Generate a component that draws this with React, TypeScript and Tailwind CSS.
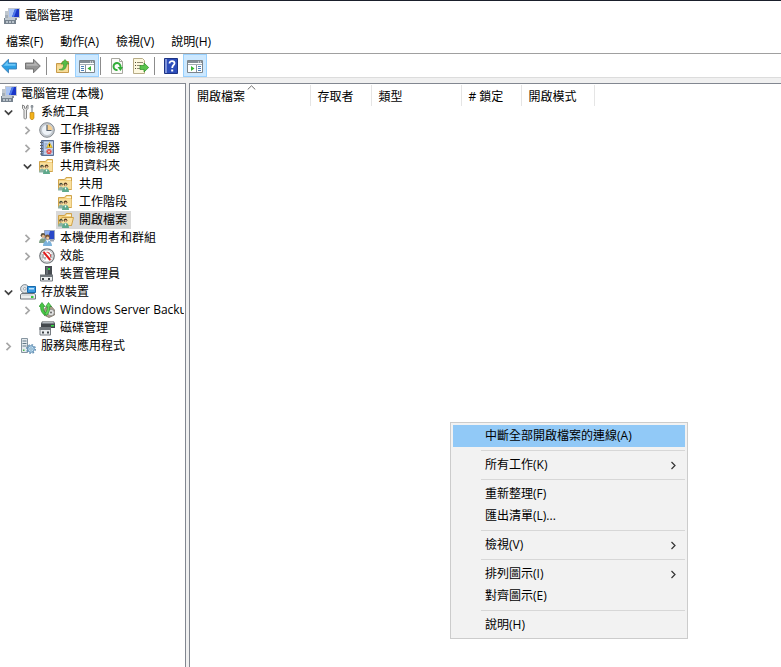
import { useState } from 'react';
import type { ReactNode } from 'react';

const Svg = ({ children }: { children: ReactNode }) => (
  <svg className="size-4 shrink-0" viewBox="0 0 16 16" fill="none" aria-hidden="true">
    {children}
  </svg>
);

const ComputerIcon = () => (
  <Svg>
    <path d="M1 3h4v8H1z" fill="#a3adb7" />
    <path d="M1 4h3M1 6h3" stroke="#d9dfe5" />
    <path d="M4 0h12v10H4z" fill="#c3c8cf" />
    <path d="M5 1h10v8H5z" fill="#1a36c8" />
    <path d="M5 1h6L8 9H5z" fill="#a9c4f4" />
    <path d="M11 1h2l-3 8H8z" fill="#4f7bea" />
    <path d="M9 10h4v2H9z" fill="#8b8f96" />
    <path d="M0 10h11l1 2v4H0z" fill="#76828e" />
    <path d="M1 10h10v2H1z" fill="#c0c9d1" />
    <path d="M2 13h2v2H2zM5 13h2v2H5zM8 13h2v2H8z" fill="#b9c2ca" />
  </Svg>
);

const ToolsIcon = () => (
  <Svg>
    <path
      d="M2.5 1v3.500L4 6v8.200c0 1 2.500 1 2.500 0V6L8 4.500V1L6.500 2v2.200h-2V2z"
      fill="#e9e9e9"
      stroke="#7c7c7c"
      strokeWidth=".9"
    />
    <path d="M11 1h2l.5 2-.8 1V9h-1.400V4l-.8-1z" fill="#8f969c" />
    <path d="M10 8.500h4V14l-1 1.500h-2L10 14z" fill="#f2b21c" stroke="#b57b08" strokeWidth=".6" />
  </Svg>
);

const ClockIcon = () => (
  <Svg>
    <circle cx="8" cy="8" r="7.300" fill="#c9cdd1" stroke="#82888e" />
    <circle cx="8" cy="8" r="5.500" fill="#eef3f8" stroke="#adb6bf" strokeWidth=".6" />
    <path d="M8 8V2.500A5.500 5.500 0 0 1 13.500 8z" fill="#f5cf92" />
    <path d="M8 3v5.500h4.500" stroke="#55616e" strokeWidth="1.200" />
  </Svg>
);

const EventIcon = () => (
  <Svg>
    <path d="M2.500.5h12v15h-12z" fill="#7f97c0" stroke="#5a6f96" />
    <path d="M5 1.500h9v13H5z" fill="#c5d5ec" />
    <path d="M5.500 4h3M5.500 6h2M5.500 8h3M5.500 12h1M13 10h1M13 12h1" stroke="#7f97c0" />
    <path d="M1 2.500h3M1 5.500h3M1 8.500h3M1 11.500h3M1 14h3" stroke="#5d6269" />
    <path d="M10.500 2.500L13.300 7.500H7.700z" fill="#ffd42a" stroke="#b99412" strokeWidth=".6" />
    <path d="M10.500 4v2.500" stroke="#3a3208" />
    <circle cx="10" cy="11.500" r="2.600" fill="#dc4a48" />
    <path d="M9 10.500l2 2M11 10.500l-2 2" stroke="#fff" strokeWidth=".7" />
  </Svg>
);

const SharedFolderIcon = ({ open = false }: { open?: boolean }) => (
  <Svg>
    <path d="M.5 3.500h6l1.500-2h5.500v12H.5z" fill="#f4d07c" stroke="#cfa34b" />
    <path d="M9 2.500h4v1.500H8z" fill="#fff7dc" />
    {open ? (
      <path d="M4 5.500h11.500l-2 8H2z" fill="#fbe2a0" stroke="#cfa34b" />
    ) : (
      <path d="M1 5h12.500v8H1z" fill="#f9df9d" />
    )}
    <circle cx="3" cy="8.500" r="1.700" fill="#3d4a3c" />
    <circle cx="3.200" cy="9.300" r="1" fill="#e3b689" />
    <path d="M0 14.500c0-5 6-5 6 0z" fill="#8cb2a4" />
    <circle cx="7.500" cy="8.300" r="1.800" fill="#5c3f22" />
    <circle cx="7.700" cy="9.100" r="1.100" fill="#e9bd90" />
    <path d="M4 16c0-7 7-7 7 0z" fill="#5fa98c" />
    <path d="M6.500 11.500l1 2.500 1-2.500z" fill="#fff" />
  </Svg>
);

const UsersIcon = () => (
  <Svg>
    <path d="M5.500.5h10v9h-10z" fill="#2847c8" stroke="#9aa6bd" />
    <path d="M6 1h5L8.500 9H6z" fill="#8fb0f0" />
    <path d="M11 10h4v1.500h-4z" fill="#9aa2ad" />
    <circle cx="4" cy="5.200" r="2.300" fill="#5b5140" />
    <circle cx="4.300" cy="6.200" r="1.500" fill="#e3b689" />
    <path d="M0 13c0-6.500 7.500-6.500 7.500 0z" fill="#7e9e84" />
    <circle cx="8.500" cy="7" r="2.400" fill="#7b5530" />
    <circle cx="8.700" cy="8" r="1.500" fill="#f0c79b" />
    <path d="M4 16c0-7.500 9-7.500 9 0z" fill="#7cb3dc" />
    <path d="M7.500 10.500l1 2.500 1-2.500z" fill="#fff" />
  </Svg>
);

const PerformanceIcon = () => (
  <Svg>
    <circle cx="8" cy="8" r="7.200" fill="#fff" stroke="#74787c" strokeWidth="1.300" />
    <circle cx="8" cy="8" r="5.900" stroke="#b9bdc0" strokeWidth=".8" />
    <path d="M4 10.500V6M6 11.500V9M12 10V6M10 4.500V6" stroke="#44474a" strokeWidth=".8" />
    <path d="M4.500 4l6.800 8" stroke="#e01c1c" strokeWidth="2" />
    <path d="M7.500 4.200c2.500-.3 4 1.500 4 4.500" stroke="#e01c1c" strokeWidth=".8" />
  </Svg>
);

const DeviceIcon = () => (
  <Svg>
    <path d="M6 0h7v9H6z" fill="#464b50" />
    <path d="M7 1h2v7H7z" fill="#656c72" />
    <path d="M9 2h2v2H9z" fill="#2fe03d" />
    <path d="M1.500 9.500h12v5.500h-12z" fill="#eceeef" stroke="#777d82" />
    <path d="M1 8.500h13V11H1z" fill="#71777c" />
    <path d="M3 12h2v2H3zM9 12h2v2H9z" fill="#3a3f44" />
  </Svg>
);

const StorageIcon = () => (
  <Svg>
    <circle cx="4.800" cy="4.800" r="4.200" fill="#dfe4e8" stroke="#7e8890" />
    <circle cx="4.800" cy="4.800" r="1.300" fill="#fff" stroke="#7e8890" strokeWidth=".7" />
    <path d="M7.500 2.500h8v6h-8z" fill="#3a9ae2" stroke="#1769ab" />
    <path d="M9 4h5v1.500H9z" fill="#bfe2fb" />
    <path d="M1.500 9.500h13l1 1.500v4H.5v-4z" fill="#eceeef" stroke="#6e757b" />
    <path d="M11 12h2.500v2H11z" fill="#38c93e" />
    <path d="M2 11h11" stroke="#c3c8cc" />
  </Svg>
);

const BackupIcon = () => (
  <Svg>
    <path d="M6 6l6-2 3.500 4v5L10 15.500 5 13z" fill="#b0a08a" stroke="#7a7064" strokeWidth=".8" />
    <circle cx="12" cy="10.500" r="3.300" fill="#e2e2e2" stroke="#858585" strokeWidth=".8" />
    <circle cx="12" cy="10.500" r="1" fill="#666" />
    <path
      d="M3 .500l3 4H4.500c0 3 .5 5 3 7.500L6 13.500C2.500 11 1.500 8 1.500 4.500H0z"
      fill="#48c645"
      stroke="#1d8a22"
      strokeWidth=".6"
    />
    <path
      d="M9.500.500l3 4h-1.700c0 4-.8 6.500-3.300 9L6 11.500C8 9 8.300 7 8.300 4.500H6.700z"
      fill="#5fd75a"
      stroke="#1d8a22"
      strokeWidth=".6"
    />
  </Svg>
);

const DiskIcon = () => (
  <Svg>
    <path d="M3 1.500h12l1 2V8H2V3.500z" fill="#43484d" />
    <path d="M3.500 2h11l.5 1.500H3z" fill="#b4babf" />
    <path d="M12 5h3v1.500h-3z" fill="#36dd43" />
    <path d="M1 7.500h10.500v7.500H1z" fill="#eceeef" stroke="#777d82" />
    <path d="M.5 7H12v3H.5z" fill="#71777c" />
    <path d="M3 11.500h2v2H3zM8 11.500h2v2H8z" fill="#3d4247" />
  </Svg>
);

const ServicesIcon = () => (
  <Svg>
    <path d="M1.500.5h6v14h-6z" fill="#e4eaee" stroke="#8695a0" />
    <path d="M2.500 3h4M2.500 5.500h4M2.500 8h4" stroke="#637a88" />
    <path d="M3 11.500h1.500V13H3z" fill="#43ba49" />
    <circle cx="11" cy="11" r="4.300" stroke="#6591b4" strokeWidth="1.400" strokeDasharray="1.700 1.670" />
    <circle cx="11" cy="11" r="3.300" fill="#c3e0f3" stroke="#5b8cb2" strokeWidth="1" />
    <circle cx="11" cy="11" r="1.200" fill="#fff" stroke="#4e86ae" strokeWidth=".7" />
  </Svg>
);

const BackIcon = () => (
  <Svg>
    <path d="M.7 8L7.500 1.200V5h8v6h-8v3.800z" fill="#2b9fe4" stroke="#3c7fb5" strokeWidth=".9" strokeLinejoin="round" />
    <path d="M2.500 7.700L6.700 3.500V6h7.800v1.700z" fill="#6cc6f6" />
  </Svg>
);

const ForwardIcon = () => (
  <Svg>
    <path d="M15.300 8L8.500 1.200V5h-8v6h8v3.800z" fill="#949494" stroke="#6c6c6c" strokeWidth=".9" strokeLinejoin="round" />
    <path d="M13.500 7.700L9.300 3.500V6H1.500v1.700z" fill="#b4b4b4" />
  </Svg>
);

const UpFolderIcon = () => (
  <Svg>
    <path d="M1.500 5.500h5l1-2h6v11h-12z" fill="#f0cb78" stroke="#c79a4a" />
    <path d="M2 7.500h11V14H2z" fill="#f7dc98" />
    <path
      d="M4 11.500c3.500 0 5-2 4.500-5.500H6L10 1.500l4 4.500h-2.500c.3 4-2.500 7.500-7.500 5.500z"
      fill="#54bd46"
      stroke="#3b8f33"
      strokeWidth=".6"
    />
  </Svg>
);

// Window with a side pane; the arrow shows which pane the button toggles
const PaneIcon = ({ side }: { side: 'left' | 'right' }) => (
  <Svg>
    <path d="M.5 2.500h15v12H.5z" fill="#fff" stroke="#7d858c" />
    <path d="M1 3h14v2H1z" fill="#858e96" />
    <path d="M11 4h1M13 4h1" stroke="#fff" />
    <path d="M1 6.500h14" stroke="#a5adb4" />
    {side === 'left' ? (
      <>
        <path d="M6.500 7v7" stroke="#8a929a" />
        <path d="M2 8.500h3M2 10.500h3M2 12.500h3" stroke="#4b7fb8" />
        <path d="M12 8v5l-3.500-2.500z" fill="#35b431" />
      </>
    ) : (
      <>
        <path d="M9.500 7v7" stroke="#8a929a" />
        <path d="M11 8.500h3M11 10.500h3M11 12.500h3" stroke="#4b7fb8" />
        <path d="M4 8v5l3.500-2.500z" fill="#35b431" />
      </>
    )}
  </Svg>
);

const RefreshIcon = () => (
  <Svg>
    <path d="M2.500.5h8l3 3v12h-11z" fill="#fbfbf8" stroke="#a8a8a0" />
    <path d="M10.500.5v3h3" stroke="#a8a8a0" />
    <path d="M8.500 12A3.500 3.500 0 1 1 11.500 9" stroke="#32ad38" strokeWidth="2" />
    <path d="M8.500 9H14l-2.500 4z" fill="#32ad38" />
  </Svg>
);

const ExportIcon = () => (
  <Svg>
    <path d="M.5.500h9l2 2v13H.5z" fill="#fdf8df" stroke="#b7ac86" />
    <path d="M2 4.500h1M2 7.500h1M2 10.500h1" stroke="#514c3c" />
    <path d="M4 4.500h6M4 7.500h4M4 10.500h3" stroke="#8e8870" />
    <path d="M7 7.500h4V5l4.700 4.500L11 14v-2.500H7z" fill="#59c44c" stroke="#2b8e25" strokeWidth=".7" />
  </Svg>
);

const HelpIcon = () => (
  <Svg>
    <path d="M1.500.5h13v15h-13z" fill="#2b4cba" stroke="#1c3384" />
    <path d="M2 1h2v14H2z" fill="#8095da" />
    <path d="M6.500 5.500c0-3.500 5.500-3 5 0C11.300 7.200 9.200 7 9.200 10" stroke="#fff" strokeWidth="1.800" />
    <path d="M8.200 11.500h2v2h-2z" fill="#fff" />
  </Svg>
);

const Chevron = ({ open }: { open?: boolean }) => (
  <svg className="size-[9px]" viewBox="0 0 9 9" fill="none" aria-hidden="true">
    {open ? (
      <path d="M.8 2.500l3.700 3.700 3.700-3.700" stroke="#404040" strokeWidth="1.700" />
    ) : (
      <path d="M2.500.8l3.700 3.700-3.700 3.700" stroke="#a6a6a6" strokeWidth="1.700" />
    )}
  </svg>
);

type TreeNode = {
  label: string;
  icon: ReactNode;
  expandable?: boolean;
  children?: TreeNode[];
};

const tree: TreeNode[] = [
  {
    label: '系統工具',
    icon: <ToolsIcon />,
    expandable: true,
    children: [
      { label: '工作排程器', icon: <ClockIcon />, expandable: true },
      { label: '事件檢視器', icon: <EventIcon />, expandable: true },
      {
        label: '共用資料夾',
        icon: <SharedFolderIcon />,
        expandable: true,
        children: [
          { label: '共用', icon: <SharedFolderIcon /> },
          { label: '工作階段', icon: <SharedFolderIcon /> },
          { label: '開啟檔案', icon: <SharedFolderIcon open /> },
        ],
      },
      { label: '本機使用者和群組', icon: <UsersIcon />, expandable: true },
      { label: '效能', icon: <PerformanceIcon />, expandable: true },
      { label: '裝置管理員', icon: <DeviceIcon /> },
    ],
  },
  {
    label: '存放裝置',
    icon: <StorageIcon />,
    expandable: true,
    children: [
      { label: 'Windows Server Backup', icon: <BackupIcon />, expandable: true },
      { label: '磁碟管理', icon: <DiskIcon /> },
    ],
  },
  { label: '服務與應用程式', icon: <ServicesIcon />, expandable: true },
];

type TreeItemProps = {
  node: TreeNode;
  selected: string;
  onSelect: (label: string) => void;
};

const TreeItem = ({ node, selected, onSelect }: TreeItemProps) => {
  const [open, setOpen] = useState(Boolean(node.children));

  return (
    <li>
      <div className="flex h-[18px] items-center">
        <div className="flex w-[18px] shrink-0 justify-center pr-0.5">
          {node.expandable && (
            <button
              aria-label={node.label}
              aria-expanded={open}
              onClick={() => setOpen(!open)}
            >
              <Chevron open={open} />
            </button>
          )}
        </div>
        <button
          onClick={() => onSelect(node.label)}
          className={`flex h-full shrink-0 items-center gap-[5px] pl-0.5 pr-1 whitespace-nowrap ${
            selected === node.label ? 'bg-[#d9d9d9]' : ''
          }`}
        >
          {node.icon}
          {node.label}
        </button>
      </div>
      {open && node.children && (
        <ul className="pl-[19px]">
          {node.children.map((child) => (
            <TreeItem key={child.label} node={child} selected={selected} onSelect={onSelect} />
          ))}
        </ul>
      )}
    </li>
  );
};

const ToolButton = ({ label, active, children }: { label: string; active?: boolean; children: ReactNode }) => (
  <button
    aria-label={label}
    className={`flex h-[23px] w-6 items-center justify-center ${
      active ? 'border border-[#99d1ff] bg-[#cce8ff]' : ''
    }`}
  >
    {children}
  </button>
);

const ToolSeparator = () => <div className="ml-px mr-1 h-[18px] w-px bg-[#8c8c8c]" />;

const Toolbar = () => (
  <div className="flex h-6 items-center border-b border-[#dcdcdc] pl-px">
    <button aria-label="上一頁" className="w-5">
      <BackIcon />
    </button>
    <ToolButton label="下一頁">
      <ForwardIcon />
    </ToolButton>
    <ToolSeparator />
    <ToolButton label="上移一層">
      <UpFolderIcon />
    </ToolButton>
    <ToolButton label="顯示/隱藏主控台樹狀目錄" active>
      <PaneIcon side="left" />
    </ToolButton>
    <ToolSeparator />
    <ToolButton label="重新整理">
      <RefreshIcon />
    </ToolButton>
    <ToolButton label="匯出清單">
      <ExportIcon />
    </ToolButton>
    <ToolSeparator />
    <ToolButton label="說明">
      <HelpIcon />
    </ToolButton>
    <ToolButton label="顯示/隱藏執行窗格" active>
      <PaneIcon side="right" />
    </ToolButton>
  </div>
);

const Column = ({ className, sorted, children }: { className: string; sorted?: boolean; children: ReactNode }) => (
  <th
    className={`relative border-r border-[#e5e5e5] pt-0.5 pr-0 pb-0 pl-[7px] font-normal whitespace-nowrap ${className}`}
    aria-sort={sorted ? 'ascending' : undefined}
  >
    {children}
    {sorted && (
      <svg className="absolute top-0 left-[57px] h-[5px] w-[9px]" viewBox="0 0 9 5" fill="none" aria-hidden="true">
        <path d="M.7 4.500l3.800-3.700 3.800 3.700" stroke="#6d6d6d" />
      </svg>
    )}
  </th>
);

const FileTable = () => (
  <table className="table-fixed">
    <thead>
      <tr className="h-[21px] text-left">
        <Column className="w-[120px]" sorted>
          開啟檔案
        </Column>
        <Column className="w-[61px]">存取者</Column>
        <Column className="w-[90px]">類型</Column>
        <Column className="w-[60px]"># 鎖定</Column>
        <Column className="w-[73px]">開啟模式</Column>
      </tr>
    </thead>
  </table>
);

type MenuEntry = { label: string; submenu?: boolean };

const menuGroups: MenuEntry[][] = [
  [{ label: '中斷全部開啟檔案的連線(A)' }],
  [{ label: '所有工作(K)', submenu: true }],
  [{ label: '重新整理(F)' }, { label: '匯出清單(L)...' }],
  [{ label: '檢視(V)', submenu: true }],
  [{ label: '排列圖示(I)', submenu: true }, { label: '對齊圖示(E)' }],
  [{ label: '說明(H)' }],
];

const ContextMenu = () => {
  const [highlighted, setHighlighted] = useState(menuGroups[0][0].label);

  return (
    <div
      role="menu"
      className="absolute top-[422px] left-[450px] w-[238px] border border-[#cccccc] bg-[#f2f2f2] p-0.5"
    >
      {menuGroups.map((group, i) => (
        <div key={group[0].label} role="group">
          {i > 0 && <div className="my-[3px] ml-7 h-px bg-[#d7d7d7]" />}
          {group.map((item) => (
            <button
              key={item.label}
              role="menuitem"
              onMouseEnter={() => setHighlighted(item.label)}
              className={`flex h-[22px] w-full items-center justify-between pr-[7px] pl-8 ${
                highlighted === item.label ? 'bg-[#91c9f7]' : ''
              }`}
            >
              {item.label}
              {item.submenu && (
                <svg className="size-[9px]" viewBox="0 0 9 9" fill="none" aria-hidden="true">
                  <path d="M2.500 1L6 4.500 2.500 8" stroke="#333" strokeWidth="1.200" />
                </svg>
              )}
            </button>
          ))}
        </div>
      ))}
    </div>
  );
};

export default function App() {
  const [selected, setSelected] = useState('開啟檔案');

  return (
    <div className="relative flex min-h-screen flex-col bg-white font-['Open_Sans','Noto_Sans_CJK_TC',sans-serif] text-[12px] leading-[18px] text-black">
      <header className="border-t border-[#1a1f2b]">
        <h1 className="flex h-[29px] items-center gap-[5px] pl-1">
          <ComputerIcon />
          電腦管理
        </h1>
        <nav className="flex h-6 items-center gap-[17px] border-b border-[#a0a0a0] pl-1.5">
          <button>檔案(F)</button>
          <button>動作(A)</button>
          <button>檢視(V)</button>
          <button>說明(H)</button>
        </nav>
        <Toolbar />
      </header>

      <main className="flex flex-1 gap-[3px] bg-[#f0f0f0] pt-[5px]">
        <aside className="w-[186px] shrink-0 border-t border-r border-[#828790] bg-white pt-px pr-px">
          <div className="overflow-hidden">
            <button
              onClick={() => setSelected('電腦管理 (本機)')}
              className={`flex h-[18px] items-center gap-1 pr-1 pl-px ${
                selected === '電腦管理 (本機)' ? 'bg-[#d9d9d9]' : ''
              }`}
            >
              <ComputerIcon />
              電腦管理 (本機)
            </button>
            <ul>
              {tree.map((node) => (
                <TreeItem key={node.label} node={node} selected={selected} onSelect={setSelected} />
              ))}
            </ul>
          </div>
        </aside>
        <section className="min-w-0 flex-1 border-t border-l border-[#828790] bg-white pt-px">
          <FileTable />
        </section>
      </main>

      <ContextMenu />
    </div>
  );
}
